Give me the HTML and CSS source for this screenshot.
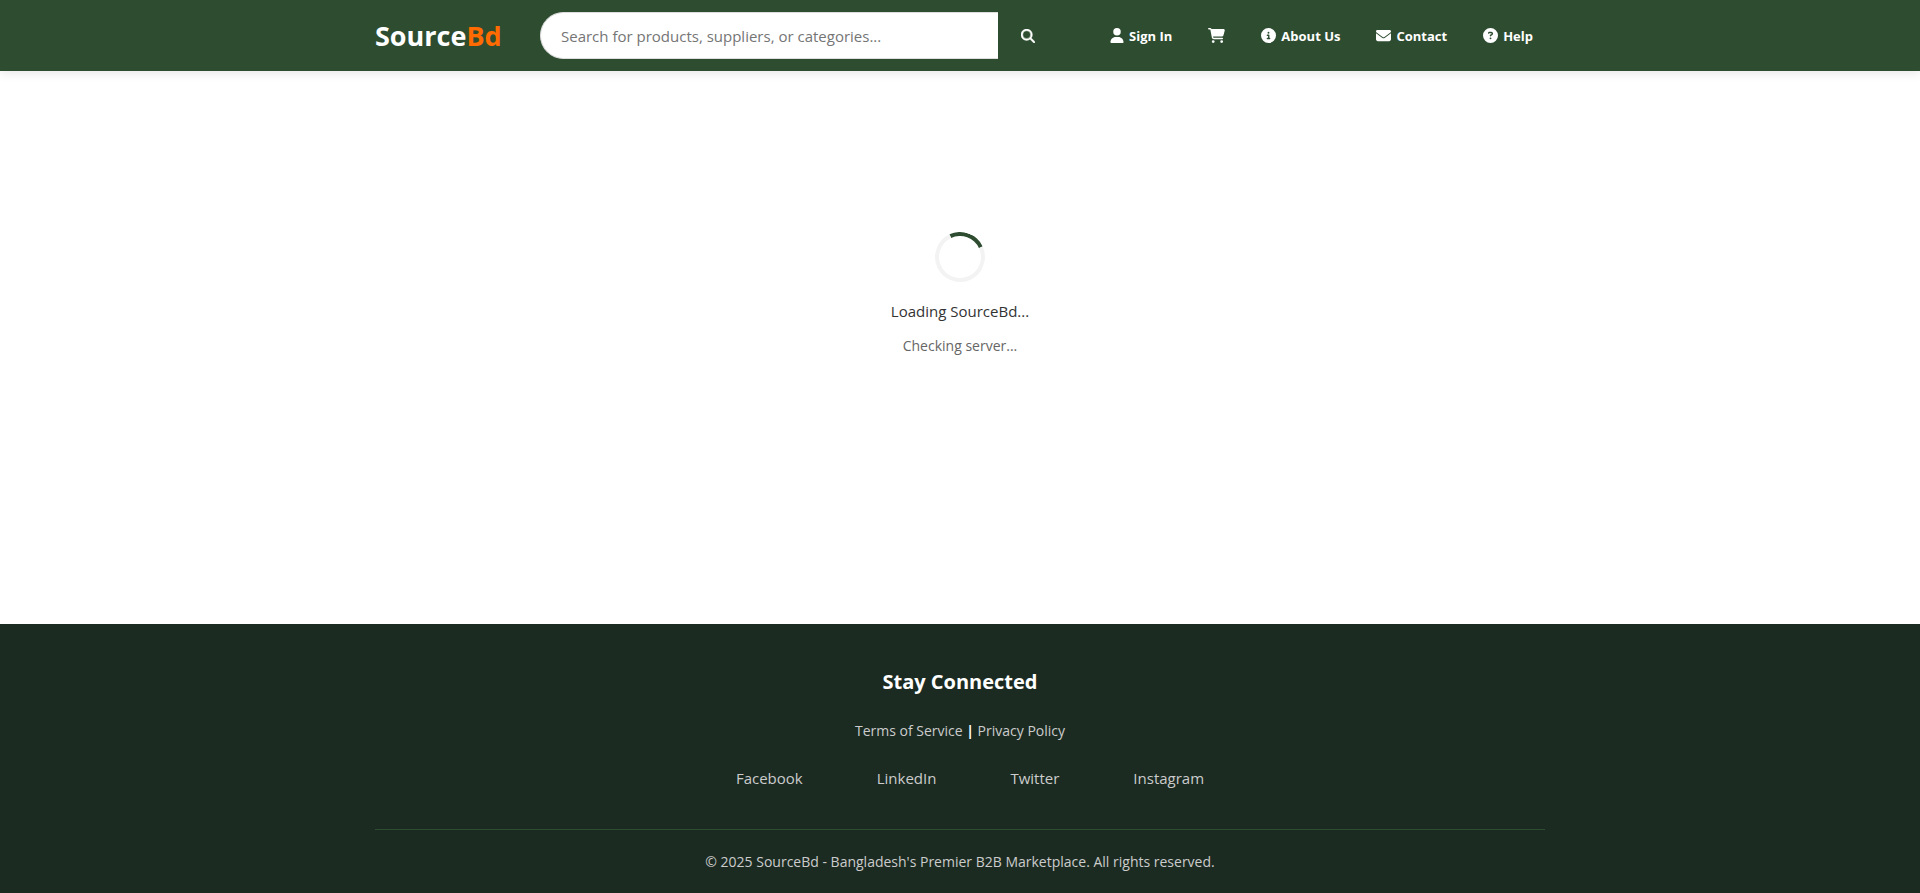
FILE: index.html
```html
<!DOCTYPE html>
<html lang="en">
<head>
<meta charset="utf-8">
<title>SourceBd</title>
<link rel="stylesheet" href="styles.css">
</head>
<body>
<header class="header">
  <div class="container header-row">
    <a class="logo" href="#">Source<span class="logo-accent">Bd</span></a>
    <form class="search">
      <input class="search-input" type="text" aria-label="Search" placeholder="Search for products, suppliers, or categories...">
      <button class="search-button" type="button" aria-label="Submit search">
        <svg class="search-icon" viewBox="0 0 512 512"><path d="M416 208c0 45.9-14.9 88.3-40 122.7L502.6 457.4c12.5 12.5 12.5 32.8 0 45.3s-32.8 12.5-45.3 0L330.7 376c-34.4 25.2-76.8 40-122.7 40C93.1 416 0 322.9 0 208S93.1 0 208 0S416 93.1 416 208zM208 352a144 144 0 1 0 0-288 144 144 0 1 0 0 288z"/></svg>
      </button>
    </form>
    <nav class="nav">
      <a class="nav-link" href="#"><svg class="icon icon-narrow" viewBox="0 0 448 512"><path d="M224 256A128 128 0 1 0 224 0a128 128 0 1 0 0 256zm-45.7 48C79.8 304 0 383.8 0 482.3C0 498.7 13.3 512 29.7 512H418.3c16.4 0 29.7-13.3 29.7-29.7C448 383.8 368.2 304 269.7 304H178.3z"/></svg><span>Sign In</span></a>
      <a class="nav-link" href="#" aria-label="Cart"><svg class="icon icon-wide" viewBox="0 0 576 512"><path d="M0 24C0 10.7 10.7 0 24 0H69.5c22 0 41.5 12.8 50.6 32h411c26.3 0 45.5 25 38.6 50.4l-41 152.3c-8.5 31.4-37 53.3-69.5 53.3H170.7l5.4 28.5c2.2 11.3 12.1 19.5 23.6 19.5H488c13.3 0 24 10.7 24 24s-10.7 24-24 24H199.7c-34.6 0-64.3-24.6-70.7-58.5L77.4 54.5c-.7-3.8-4-6.5-7.9-6.5H24C10.7 48 0 37.3 0 24zM128 464a48 48 0 1 1 96 0 48 48 0 1 1 -96 0zm336-48a48 48 0 1 1 0 96 48 48 0 1 1 0-96z"/></svg></a>
      <a class="nav-link" href="#"><svg class="icon" viewBox="0 0 512 512"><path d="M256 512A256 256 0 1 0 256 0a256 256 0 1 0 0 512zM216 336h24V272H216c-13.3 0-24-10.7-24-24s10.7-24 24-24h48c13.3 0 24 10.7 24 24v88h8c13.3 0 24 10.7 24 24s-10.7 24-24 24H216c-13.3 0-24-10.7-24-24s10.7-24 24-24zm40-208a32 32 0 1 1 0 64 32 32 0 1 1 0-64z"/></svg><span>About Us</span></a>
      <a class="nav-link" href="#"><svg class="icon" viewBox="0 0 512 512"><path d="M48 64C21.5 64 0 85.5 0 112c0 15.1 7.1 29.3 19.2 38.4L236.8 313.6c11.4 8.5 27 8.5 38.4 0L492.8 150.4c12.1-9.1 19.2-23.3 19.2-38.4c0-26.5-21.5-48-48-48H48zM0 176V384c0 35.3 28.7 64 64 64H448c35.3 0 64-28.7 64-64V176L294.4 339.2c-22.8 17.1-54 17.1-76.8 0L0 176z"/></svg><span>Contact</span></a>
      <a class="nav-link" href="#"><svg class="icon" viewBox="0 0 512 512"><path d="M256 512A256 256 0 1 0 256 0a256 256 0 1 0 0 512zM169.8 165.3c7.9-22.3 29.1-37.3 52.8-37.3h58.3c34.9 0 63.1 28.3 63.1 63.1c0 22.6-12.1 43.5-31.7 54.8L280 264.4c-.2 13-10.9 23.6-24 23.6c-13.3 0-24-10.7-24-24V250.5c0-8.6 4.6-16.5 12.1-20.8l44.3-25.4c4.7-2.7 7.6-7.7 7.6-13.1c0-8.4-6.8-15.1-15.1-15.1H222.6c-3.4 0-6.4 2.1-7.5 5.3l-.4 1.2c-4.4 12.5-18.2 19-30.6 14.6s-19-18.2-14.6-30.6l.3-1.2zM224 352a32 32 0 1 1 64 0 32 32 0 1 1 -64 0z"/></svg><span>Help</span></a>
    </nav>
  </div>
</header>
<main class="main">
  <div class="spinner"></div>
  <p class="loading">Loading SourceBd...</p>
  <p class="status">Checking server...</p>
</main>
<footer class="footer">
  <div class="container">
    <h3 class="footer-title">Stay Connected</h3>
    <p class="legal"><a href="#">Terms of Service</a> <b>|</b> <a href="#">Privacy Policy</a></p>
    <ul class="social">
      <li><a href="#">Facebook</a></li>
      <li><a href="#">LinkedIn</a></li>
      <li><a href="#">Twitter</a></li>
      <li><a href="#">Instagram</a></li>
    </ul>
    <p class="copyright">© 2025 SourceBd - Bangladesh's Premier B2B Marketplace. All rights reserved.</p>
  </div>
</footer>
</body>
</html>
```
FILE: styles.css
```css
* { box-sizing: border-box; margin: 0; padding: 0; }
body {
  min-height: 100vh;
  display: flex;
  flex-direction: column;
  background: #fff;
  color: #333;
  font-family: "Segoe UI", "Open Sans", "Noto Sans", sans-serif;
  font-size: 15px;
  line-height: 24px;
}
a { color: inherit; text-decoration: none; }
.container { width: 100%; max-width: 1200px; margin: 0 auto; padding: 0 15px; }
.header { background: #2e4d30; color: #fff; padding: 12px 0; box-shadow: 0 2px 10px rgba(0, 0, 0, 0.1); }
.header-row { display: flex; align-items: center; }
.logo { font-size: 27px; font-weight: 700; line-height: 40px; width: 165px; flex: none; }
.logo-accent { color: #ff6b00; }
.search { display: flex; flex: 1; margin-right: 40px; }
.search-input {
  flex: 1;
  min-width: 0;
  height: 47px;
  padding: 0 20px;
  border: 1px solid #ddd;
  border-right: 0;
  border-radius: 24px 0 0 24px;
  background: #fff;
  color: #333;
  font: inherit;
}
.search-input::placeholder { color: #757575; opacity: 1; }
.search-button { display: flex; align-items: center; justify-content: center; width: 60px; border: 0; background: transparent; cursor: pointer; }
.search-icon { width: 14px; height: 14px; fill: #fff; stroke: #fff; stroke-width: 16px; }
.nav { display: flex; align-items: center; gap: 12px; }
.nav-link { display: flex; align-items: center; gap: 5px; padding: 0 12px; font-size: 13px; font-weight: 700; }
.icon { width: 15px; height: 15px; margin-bottom: 1px; fill: #fff; }
.icon-narrow { width: 14px; }
.icon-wide { width: 17px; }
.main { flex: 1; padding: 161px 15px 160px; text-align: center; }
.spinner {
  width: 50px;
  height: 50px;
  margin: 0 auto 17px;
  border: 4px solid #f3f3f3;
  border-top-color: #2e4d30;
  border-radius: 50%;
  transform: rotate(20deg);
}
.status { margin-top: 11px; color: #666; font-size: 14px; }
.footer { padding: 41px 0 19px; background: #1b2b22; color: #fff; text-align: center; }
.footer-title { margin-bottom: 20px; font-size: 20px; line-height: 34px; }
.legal { margin-bottom: 23px; font-size: 14px; }
.legal a, .social a { color: #ccc; }
.social { display: flex; justify-content: center; gap: 74px; padding-left: 20px; list-style: none; }
.copyright { margin-top: 39px; padding-top: 20px; border-top: 1px solid #2e4d30; color: #ccc; font-size: 14px; }
```
